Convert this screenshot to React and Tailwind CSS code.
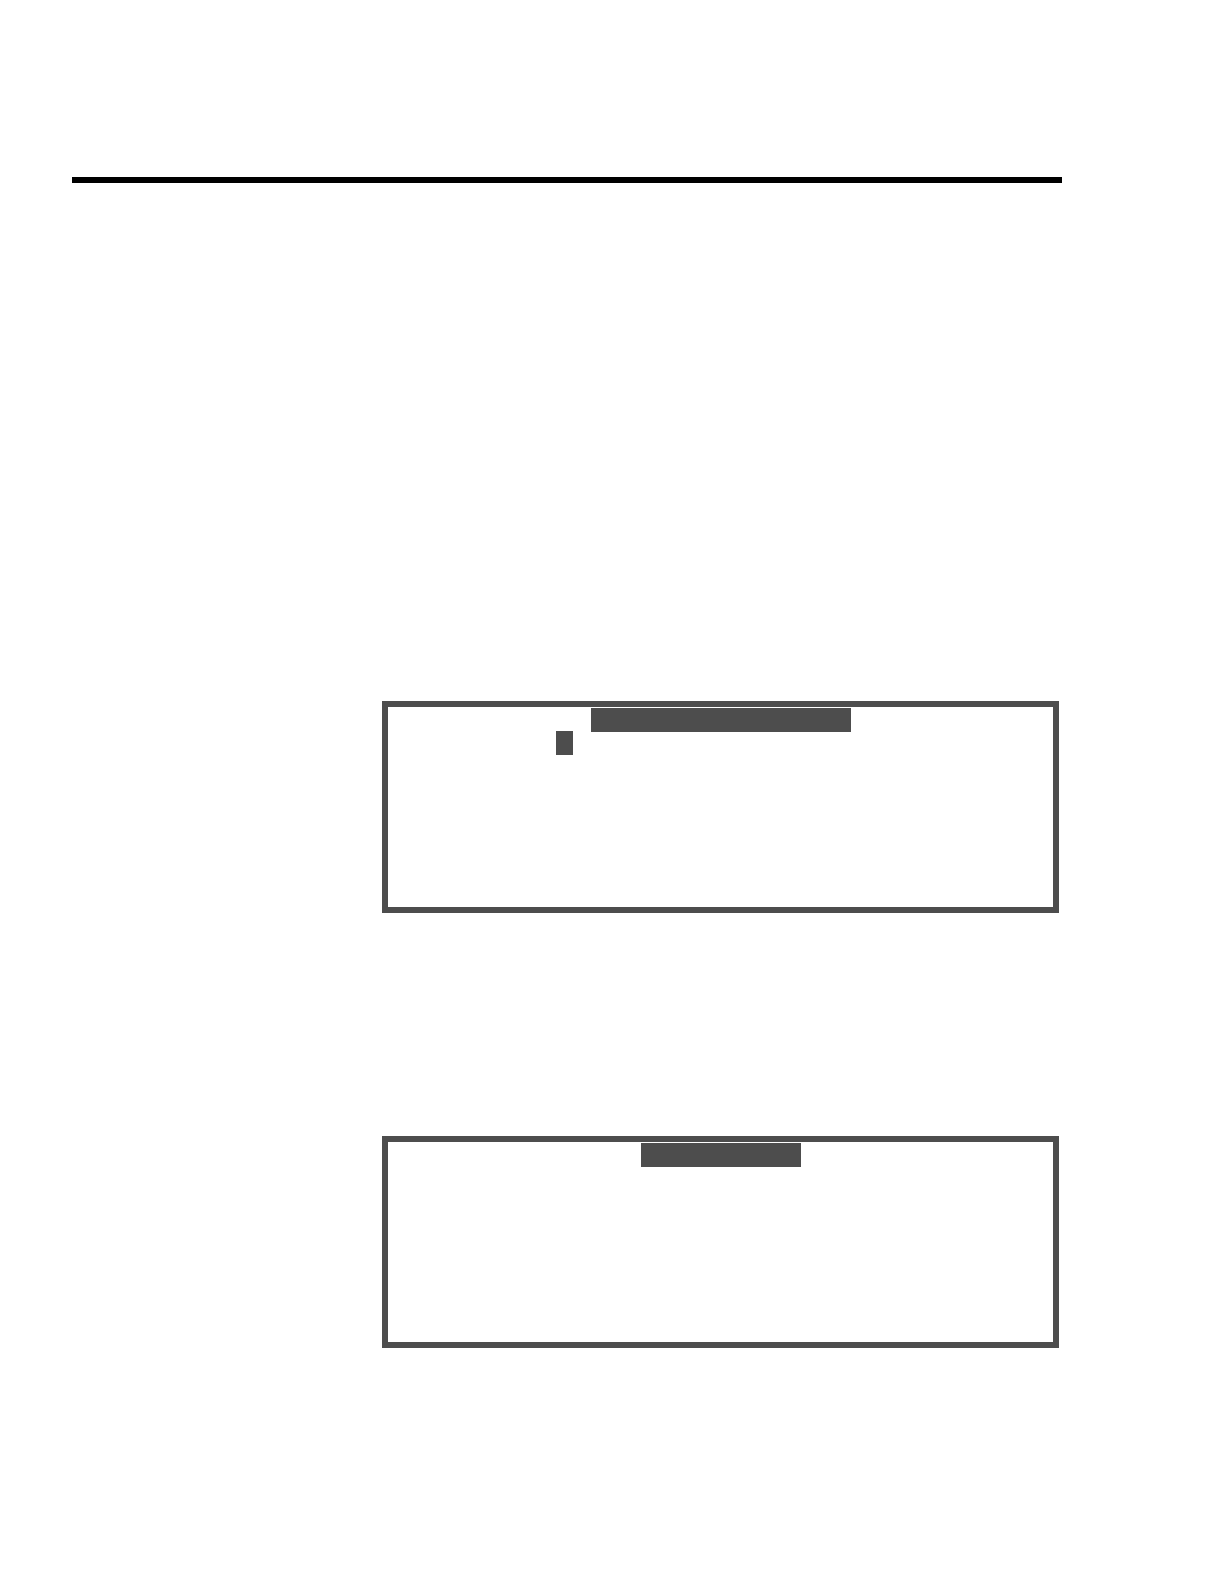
import React from 'react';

const panels = [
  { id: 'first', titleWidth: 'w-[260px]', cursor: true },
  { id: 'second', titleWidth: 'w-[160px]', cursor: false },
];

const Panel = ({ titleWidth, cursor }) => {
  return (
    <section className="min-h-[212px] border-6 border-[#4d4d4d] bg-white pt-px pl-px">
      <div className="flex flex-col -space-y-px">
        <div className={`h-6 self-center bg-[#4d4d4d] ${titleWidth}`} />
        {cursor && (
          <div className="pl-[167px]">
            <div className="h-6 w-[17px] bg-[#4d4d4d]" />
          </div>
        )}
      </div>
    </section>
  );
};

const App = () => {
  return (
    <div className="min-h-screen bg-white pt-[177px] pr-[162px] pb-[236px] pl-[72px]">
      <hr className="border-t-6 border-black" />

      {/* Panels sit in the wide column, right of the page margin */}
      <main className="flex flex-col gap-[223px] pt-[518px] pr-[3px] pl-[310px]">
        {panels.map((panel) => (
          <Panel key={panel.id} titleWidth={panel.titleWidth} cursor={panel.cursor} />
        ))}
      </main>
    </div>
  );
};

export default App;
